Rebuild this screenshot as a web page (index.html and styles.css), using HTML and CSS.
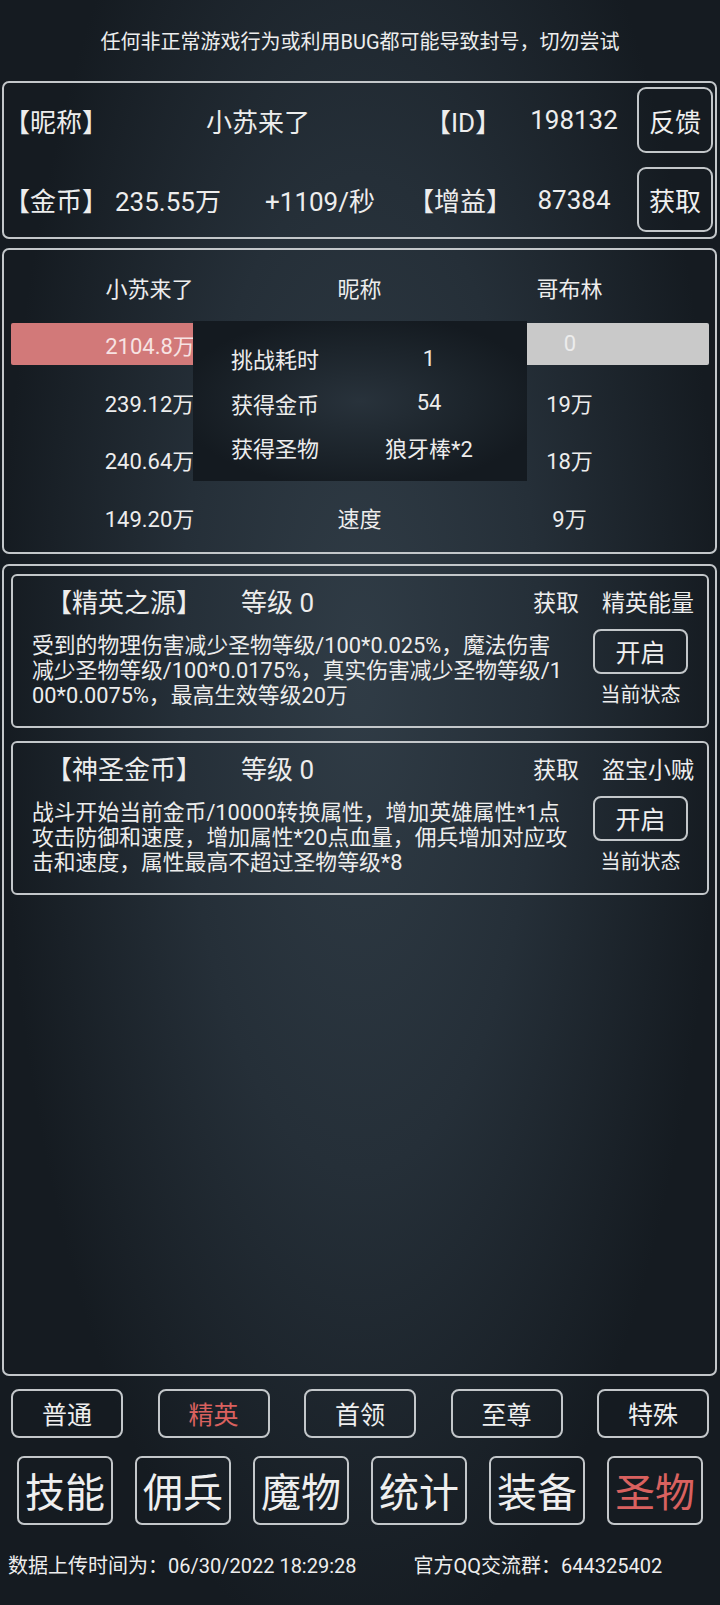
FILE: index.html
```html
<!DOCTYPE html>
<html lang="zh-CN">
<head>
    <meta charset="UTF-8">
    <meta name="viewport" content="width=device-width, initial-scale=1.0">
    <title>圣物</title>
    <link rel="stylesheet" href="styles.css">
</head>
<body>

<p class="notice">任何非正常游戏行为或利用BUG都可能导致封号，切勿尝试</p>

<!-- Player info -->
<div class="panel info">
    <div class="info-row">
        <span class="i-label">【昵称】</span>
        <span class="i-name">小苏来了</span>
        <span class="i-key">【ID】</span>
        <span class="i-val">198132</span>
        <button class="btn-side">反馈</button>
    </div>
    <div class="info-row">
        <span class="i-label">【金币】</span>
        <span class="i-gold">235.55万</span>
        <span class="i-rate">+1109/秒</span>
        <span class="i-key2">【增益】</span>
        <span class="i-val">87384</span>
        <button class="btn-side">获取</button>
    </div>
</div>

<!-- Battle compare -->
<div class="panel battle">
    <div class="b-row"><span>小苏来了</span><span>昵称</span><span>哥布林</span></div>
    <div class="b-row hp-row">
        <div class="hp-bar"><span class="hp-me">2104.8万</span><span>血量</span><span class="hp-foe">0</span></div>
    </div>
    <div class="b-row"><span>239.12万</span><span>攻击</span><span>19万</span></div>
    <div class="b-row"><span>240.64万</span><span>防御</span><span>18万</span></div>
    <div class="b-row"><span>149.20万</span><span>速度</span><span>9万</span></div>

    <div class="result">
        <span>挑战耗时</span><span>1</span>
        <span>获得金币</span><span>54</span>
        <span>获得圣物</span><span>狼牙棒*2</span>
    </div>
</div>

<!-- Relics -->
<div class="panel relics">
    <div class="card">
        <div class="card-head">
            <span class="card-title">【精英之源】</span>
            <span class="card-level">等级 0</span>
            <span class="card-get">获取</span>
            <span class="card-src">精英能量</span>
        </div>
        <div class="card-body">
            <p class="card-desc">受到的物理伤害减少圣物等级/100*0.025%，魔法伤害<br>减少圣物等级/100*0.0175%，真实伤害减少圣物等级/1<br>00*0.0075%，最高生效等级20万</p>
            <div class="card-side">
                <button class="btn-open">开启</button>
                <span class="card-state">当前状态</span>
            </div>
        </div>
    </div>
    <div class="card">
        <div class="card-head">
            <span class="card-title">【神圣金币】</span>
            <span class="card-level">等级 0</span>
            <span class="card-get">获取</span>
            <span class="card-src">盗宝小贼</span>
        </div>
        <div class="card-body">
            <p class="card-desc">战斗开始当前金币/10000转换属性，增加英雄属性*1点<br>攻击防御和速度，增加属性*20点血量，佣兵增加对应攻<br>击和速度，属性最高不超过圣物等级*8</p>
            <div class="card-side">
                <button class="btn-open">开启</button>
                <span class="card-state">当前状态</span>
            </div>
        </div>
    </div>
</div>

<!-- Monster tiers -->
<div class="tabs">
    <button class="tab">普通</button>
    <button class="tab active">精英</button>
    <button class="tab">首领</button>
    <button class="tab">至尊</button>
    <button class="tab">特殊</button>
</div>

<!-- Main menu -->
<div class="menu">
    <button class="menu-btn">技能</button>
    <button class="menu-btn">佣兵</button>
    <button class="menu-btn">魔物</button>
    <button class="menu-btn">统计</button>
    <button class="menu-btn">装备</button>
    <button class="menu-btn active">圣物</button>
</div>

<div class="footer">
    <span>数据上传时间为：06/30/2022 18:29:28</span>
    <span class="qq">官方QQ交流群：644325402</span>
</div>

</body>
</html>
```

FILE: styles.css
```css
/* Basic styling */
body {
    margin: 0;
    height: 1605px;
    overflow: hidden;
    font-family: Roboto, "Noto Sans CJK SC", sans-serif;
    color: #ededed;
    background: radial-gradient(ellipse 50% 62% at 50% 42%, #303c46 0%, #252f38 50%, #151b21 100%);
}

button {
    font-family: inherit;
    color: #efefef;
    background: transparent;
    border: 2px solid #c3c7ca;
    border-radius: 8px;
    padding: 0;
    cursor: pointer;
}

.notice {
    margin: 0;
    padding-top: 27px;
    line-height: 30px;
    font-size: 20px;
    text-align: center;
}

.panel {
    margin: 0 3px 0 2px;
    border: 2px solid #c3c7ca;
    border-radius: 7px;
}

/* Player info */
.info {
    margin-top: 24px;
    padding: 4px 2px 5px 0;
    font-size: 26px;
}

.info-row {
    display: flex;
    align-items: center;
    height: 66px;
}

.info-row + .info-row {
    margin-top: 14px;
    height: 65px;
}

.i-label {
    width: 104px;
}

.i-name {
    width: 300px;
    text-align: center;
}

.i-key {
    width: 104px;
    padding-left: 17px;
    box-sizing: border-box;
}

.i-gold {
    width: 142px;
    padding-left: 7px;
    box-sizing: border-box;
}

.i-rate {
    width: 140px;
    text-align: center;
}

.i-key2 {
    width: 122px;
    padding-left: 18px;
    box-sizing: border-box;
}

.i-val {
    width: 124px;
    text-align: center;
}

.btn-side {
    width: 76px;
    height: 100%;
    margin-left: 1px;
    font-size: 26px;
    border-radius: 9px;
}

/* Battle compare */
.battle {
    position: relative;
    margin-top: 9px;
    padding: 8px 0 6px;
    font-size: 22px;
}

.b-row {
    display: grid;
    grid-template-columns: repeat(3, 210px);
    justify-content: center;
    align-items: center;
    height: 57.5px;
    text-align: center;
}

.hp-row {
    display: block;
    padding: 7px 6px 0 7px;
    box-sizing: border-box;
}

.hp-bar {
    display: grid;
    grid-template-columns: repeat(3, 210px);
    justify-content: center;
    align-items: center;
    height: 42px;
    border-radius: 2px;
    background: linear-gradient(to right, #d27979 50%, #c9c9c9 50%);
}

.hp-me {
    color: #f7e3e3;
}

.hp-foe {
    color: #ececec;
}

.result {
    position: absolute;
    left: 189px;
    top: 71px;
    width: 334px;
    height: 160px;
    box-sizing: border-box;
    padding-top: 15px;
    display: grid;
    grid-template-columns: 124px 184px;
    grid-auto-rows: 44.5px;
    align-items: center;
    padding-left: 20px;
    text-align: center;
    background: radial-gradient(ellipse 55% 55% at 50% 50%, #28323b 0%, #1c242b 60%, #141a20 100%);
}

/* Relics */
.relics {
    margin-top: 10px;
    height: 812px;
    box-sizing: border-box;
    padding: 8px 6px 8px 7px;
}

.card {
    height: 154px;
    box-sizing: border-box;
    border: 2px solid #c3c7ca;
    border-radius: 6px;
    padding-top: 2px;
}

.card + .card {
    margin-top: 13px;
}

.card-head {
    display: flex;
    align-items: center;
    height: 46px;
    padding: 0 13px 0 33px;
    font-size: 23px;
}

.card-title,
.card-level {
    font-size: 26px;
}

.card-level {
    margin-left: 39px;
}

.card-get {
    margin-left: auto;
}

.card-src {
    margin-left: 23px;
}

.card-body {
    display: flex;
}

.card-desc {
    margin: 9.5px 0 0;
    padding-left: 19px;
    width: 561px;
    box-sizing: border-box;
    font-size: 21.8px;
    line-height: 25px;
    white-space: nowrap;
}

.card-side {
    flex: 1;
    display: flex;
    flex-direction: column;
    align-items: center;
    padding-top: 5px;
}

.btn-open {
    width: 95px;
    height: 45px;
    font-size: 25px;
}

.card-state {
    margin-top: 9.5px;
    font-size: 20px;
    line-height: 25px;
}

/* Monster tiers */
.tabs {
    display: flex;
    justify-content: space-between;
    margin-top: 13px;
    padding: 0 11px;
}

.tab {
    width: 112px;
    height: 49px;
    font-size: 25px;
}

.active {
    color: #d9615f;
}

/* Main menu */
.menu {
    display: flex;
    gap: 22px;
    margin-top: 18px;
    padding: 0 17px;
}

.menu-btn {
    width: 96px;
    height: 69px;
    font-size: 40px;
    border-radius: 7px;
}

.footer {
    margin-top: 26px;
    padding-left: 8px;
    line-height: 30px;
    font-size: 20px;
}

.qq {
    margin-left: 52px;
}
```
